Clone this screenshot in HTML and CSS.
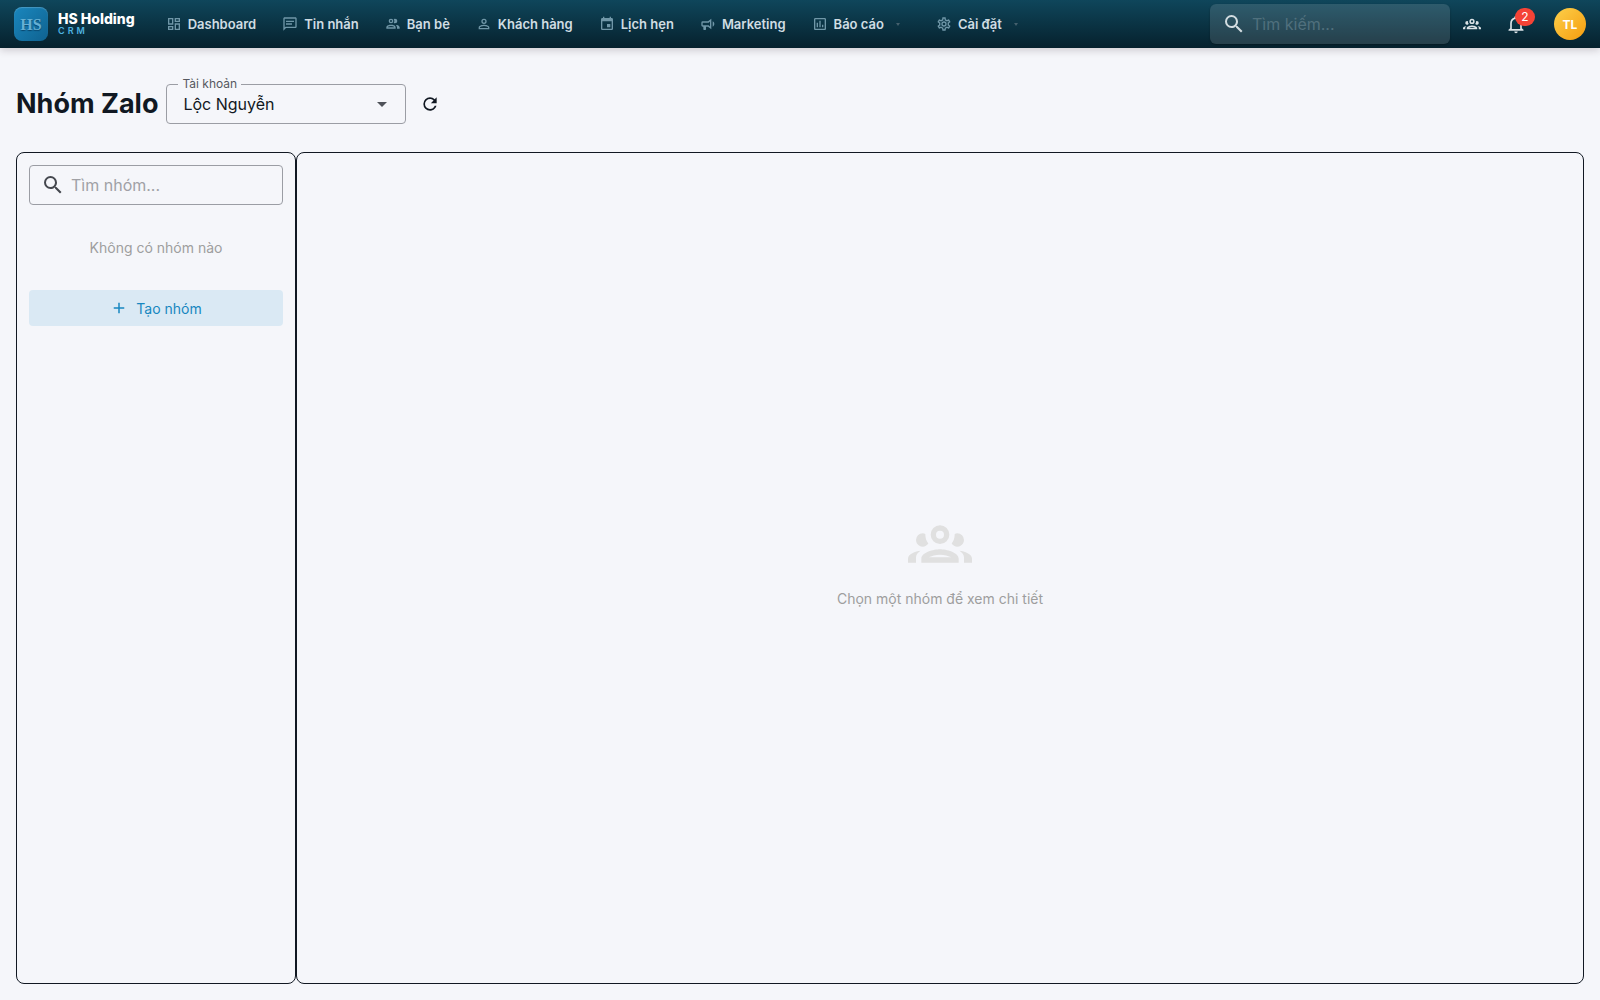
FILE: index.html
```
<!DOCTYPE html>
<html lang="vi">
<head>
  <meta charset="UTF-8">
  <title>Nhóm Zalo - HS Holding CRM</title>
  <meta name="viewport" content="width=device-width, initial-scale=1.0">
  <link rel="stylesheet" href="styles.css">
</head>
<body>

  <header class="navbar">
    <a href="#" class="brand">
      <span class="logo">HS</span>
      <span class="brand-text">
        <span class="brand-name">HS Holding</span>
        <span class="brand-sub">CRM</span>
      </span>
    </a>

    <nav class="menu">
      <a href="#"><svg class="icon" viewBox="0 0 24 24"><path d="M19,5V7H15V5H19M9,5V11H5V5H9M19,13V19H15V13H19M9,17V19H5V17H9M21,3H13V9H21V3M11,3H3V13H11V3M21,11H13V21H21V11M11,15H3V21H11V15Z"/></svg>Dashboard</a>
      <a href="#"><svg class="icon" viewBox="0 0 24 24"><path d="M20 2H4C2.9 2 2 2.9 2 4V22L6 18H20C21.1 18 22 17.1 22 16V4C22 2.9 21.1 2 20 2M20 16H5.2L4 17.2V4H20V16M6 7H18V9H6V7M6 11H15V13H6V11Z"/></svg>Tin nhắn</a>
      <a href="#"><svg class="icon" viewBox="0 0 24 24"><path d="M13.07 10.41A5 5 0 0 0 13.07 4.59A3.39 3.39 0 0 1 15 4A3.5 3.5 0 0 1 15 11A3.39 3.39 0 0 1 13.07 10.41M5.5 7.5A3.5 3.5 0 1 1 9 11A3.5 3.5 0 0 1 5.5 7.5M7.5 7.5A1.5 1.5 0 1 0 9 6A1.5 1.5 0 0 0 7.5 7.5M16 17V19H2V17S2 13 9 13 16 17 16 17M14 17C13.86 16.22 12.67 15 9 15S4.07 16.31 4 17M15.95 13A5.32 5.32 0 0 1 18 17V19H22V17S22 13.37 15.94 13Z"/></svg>Bạn bè</a>
      <a href="#"><svg class="icon" viewBox="0 0 24 24"><path d="M12,4A4,4 0 0,1 16,8A4,4 0 0,1 12,12A4,4 0 0,1 8,8A4,4 0 0,1 12,4M12,6A2,2 0 0,0 10,8A2,2 0 0,0 12,10A2,2 0 0,0 14,8A2,2 0 0,0 12,6M12,13C14.67,13 20,14.33 20,17V20H4V17C4,14.33 9.33,13 12,13M12,14.9C9.03,14.9 5.9,16.36 5.9,17V18.1H18.1V17C18.1,16.36 14.97,14.9 12,14.9Z"/></svg>Khách hàng</a>
      <a href="#"><svg class="icon" viewBox="0 0 24 24"><path d="M19,19H5V8H19M16,1V3H8V1H6V3H5C3.89,3 3,3.89 3,5V19A2,2 0 0,0 5,21H19A2,2 0 0,0 21,19V5C21,3.89 20.1,3 19,3H18V1M17,12H12V17H17V12Z"/></svg>Lịch hẹn</a>
      <a href="#"><svg class="icon" viewBox="0 0 24 24"><path d="M12,8H4A2,2 0 0,0 2,10V14A2,2 0 0,0 4,16H5V20A1,1 0 0,0 6,21H8A1,1 0 0,0 9,20V16H12L17,20V4L12,8M15,15.6L13,14H4V10H13L15,8.4V15.6M21.5,12C21.5,13.71 20.54,15.26 19,16V8C20.53,8.75 21.5,10.3 21.5,12Z"/></svg>Marketing</a>
      <a href="#" class="has-sub"><svg class="icon" viewBox="0 0 24 24"><path d="M9 17H7V10H9V17M13 17H11V7H13V17M17 17H15V13H17V17M19 19H5V5H19V19.1M19 3H5C3.9 3 3 3.9 3 5V19C3 20.1 3.9 21 5 21H19C20.1 21 21 20.1 21 19V5C21 3.9 20.1 3 19 3Z"/></svg>Báo cáo<span class="caret"></span></a>
      <a href="#" class="has-sub"><svg class="icon" viewBox="0 0 24 24"><path d="M12,8A4,4 0 0,1 16,12A4,4 0 0,1 12,16A4,4 0 0,1 8,12A4,4 0 0,1 12,8M12,10A2,2 0 0,0 10,12A2,2 0 0,0 12,14A2,2 0 0,0 14,12A2,2 0 0,0 12,10M10,22C9.75,22 9.54,21.82 9.5,21.58L9.13,18.93C8.5,18.68 7.96,18.34 7.44,17.94L4.95,18.95C4.73,19.03 4.46,18.95 4.34,18.73L2.34,15.27C2.21,15.05 2.27,14.78 2.46,14.63L4.57,12.97L4.5,12L4.57,11L2.46,9.37C2.27,9.22 2.21,8.95 2.34,8.73L4.34,5.27C4.46,5.05 4.73,4.96 4.95,5.05L7.44,6.05C7.96,5.66 8.5,5.32 9.13,5.07L9.5,2.42C9.54,2.18 9.75,2 10,2H14C14.25,2 14.46,2.18 14.5,2.42L14.87,5.07C15.5,5.32 16.04,5.66 16.56,6.05L19.05,5.05C19.27,4.96 19.54,5.05 19.66,5.27L21.66,8.73C21.79,8.95 21.73,9.22 21.54,9.37L19.43,11L19.5,12L19.43,13L21.54,14.63C21.73,14.78 21.79,15.05 21.66,15.27L19.66,18.73C19.54,18.95 19.27,19.04 19.05,18.95L16.56,17.95C16.04,18.34 15.5,18.68 14.87,18.93L14.5,21.58C14.46,21.82 14.25,22 14,22H10M11.25,4L10.88,6.61C9.68,6.86 8.62,7.5 7.85,8.39L5.44,7.35L4.69,8.65L6.8,10.2C6.4,11.37 6.4,12.64 6.8,13.8L4.68,15.36L5.43,16.66L7.86,15.62C8.63,16.5 9.68,17.14 10.87,17.38L11.24,20H12.76L13.13,17.39C14.32,17.14 15.37,16.5 16.14,15.62L18.57,16.66L19.32,15.36L17.2,13.81C17.6,12.64 17.6,11.37 17.2,10.2L19.31,8.65L18.56,7.35L16.15,8.39C15.38,7.5 14.32,6.86 13.12,6.62L12.75,4H11.25Z"/></svg>Cài đặt<span class="caret"></span></a>
    </nav>

    <div class="nav-right">
      <div class="nav-search">
        <svg class="icon" viewBox="0 0 24 24"><path d="M9.5,3A6.5,6.5 0 0,1 16,9.5C16,11.11 15.41,12.59 14.44,13.73L14.71,14H15.5L20.5,19L19,20.5L14,15.5V14.71L13.73,14.44C12.59,15.41 11.11,16 9.5,16A6.5,6.5 0 0,1 3,9.5A6.5,6.5 0 0,1 9.5,3M9.5,5C7,5 5,7 5,9.5C5,12 7,14 9.5,14C12,14 14,12 14,9.5C14,7 12,5 9.5,5Z"/></svg>
        <input type="text" placeholder="Tìm kiếm..." aria-label="Tìm kiếm">
      </div>
      <button class="nav-btn nav-group" aria-label="Nhóm">
        <svg class="icon" viewBox="0 0 24 24"><path d="M12,5A3.5,3.5 0 0,0 8.5,8.5A3.5,3.5 0 0,0 12,12A3.5,3.5 0 0,0 15.5,8.5A3.5,3.5 0 0,0 12,5M12,7A1.5,1.5 0 0,1 13.5,8.5A1.5,1.5 0 0,1 12,10A1.5,1.5 0 0,1 10.5,8.5A1.5,1.5 0 0,1 12,7M5.5,8A2.5,2.5 0 0,0 3,10.5C3,11.44 3.53,12.25 4.29,12.68C4.65,12.88 5.06,13 5.5,13C5.94,13 6.35,12.88 6.71,12.68C7.08,12.47 7.39,12.17 7.62,11.81C6.89,10.86 6.5,9.7 6.5,8.5C6.5,8.41 6.5,8.31 6.5,8.22C6.2,8.08 5.86,8 5.5,8M18.5,8C18.14,8 17.8,8.08 17.5,8.22C17.5,8.31 17.5,8.41 17.5,8.5C17.5,9.7 17.11,10.86 16.38,11.81C16.5,12 16.63,12.15 16.78,12.3C16.94,12.45 17.1,12.58 17.29,12.68C17.65,12.88 18.06,13 18.5,13C18.94,13 19.35,12.88 19.71,12.68C20.47,12.25 21,11.44 21,10.5A2.5,2.5 0 0,0 18.5,8M12,14C9.66,14 5,15.17 5,17.5V19H19V17.5C19,15.17 14.34,14 12,14M4.71,14.55C2.78,14.78 0,15.76 0,17.5V19H3V17.07C3,16.06 3.69,15.22 4.71,14.55M19.29,14.55C20.31,15.22 21,16.06 21,17.07V19H24V17.5C24,15.76 21.22,14.78 19.29,14.55M12,16C13.53,16 15.24,16.5 16.23,17H7.77C8.76,16.5 10.47,16 12,16Z"/></svg>
      </button>
      <button class="nav-btn nav-bell" aria-label="Thông báo">
        <svg class="icon" viewBox="0 0 24 24"><path d="M10 21H14C14 22.1 13.1 23 12 23S10 22.1 10 21M21 19V20H3V19L5 17V11C5 7.9 7 5.2 10 4.3V4C10 2.9 10.9 2 12 2S14 2.9 14 4V4.3C17 5.2 19 7.9 19 11V17L21 19M17 11C17 8.2 14.8 6 12 6S7 8.2 7 11V18H17V11Z"/></svg>
        <span class="badge">2</span>
      </button>
      <button class="avatar">TL</button>
    </div>
  </header>

  <main class="page">
    <div class="page-head">
      <h1>Nhóm Zalo</h1>
      <div class="account">
        <label for="account">Tài khoản</label>
        <select id="account">
          <option>Lộc Nguyễn</option>
        </select>
        <svg class="icon" viewBox="0 0 24 24"><path d="M7,10L12,15L17,10H7Z"/></svg>
      </div>
      <button class="refresh" aria-label="Tải lại">
        <svg class="icon" viewBox="0 0 24 24"><path d="M17.65,6.35C16.2,4.9 14.21,4 12,4A8,8 0 0,0 4,12A8,8 0 0,0 12,20C15.73,20 18.84,17.45 19.73,14H17.65C16.83,16.33 14.61,18 12,18A6,6 0 0,1 6,12A6,6 0 0,1 12,6C13.66,6 15.14,6.69 16.22,7.78L13,11H20V4L17.65,6.35Z"/></svg>
      </button>
    </div>

    <div class="panels">
      <aside class="panel group-list">
        <div class="field">
          <svg class="icon" viewBox="0 0 24 24"><path d="M9.5,3A6.5,6.5 0 0,1 16,9.5C16,11.11 15.41,12.59 14.44,13.73L14.71,14H15.5L20.5,19L19,20.5L14,15.5V14.71L13.73,14.44C12.59,15.41 11.11,16 9.5,16A6.5,6.5 0 0,1 3,9.5A6.5,6.5 0 0,1 9.5,3M9.5,5C7,5 5,7 5,9.5C5,12 7,14 9.5,14C12,14 14,12 14,9.5C14,7 12,5 9.5,5Z"/></svg>
          <input type="text" placeholder="Tìm nhóm..." aria-label="Tìm nhóm">
        </div>
        <p class="empty-text">Không có nhóm nào</p>
        <button class="create-btn">
          <svg class="icon" viewBox="0 0 24 24"><path d="M19,13H13V19H11V13H5V11H11V5H13V11H19V13Z"/></svg>
          Tạo nhóm
        </button>
      </aside>

      <section class="panel group-detail">
        <svg class="icon" viewBox="0 0 24 24"><path d="M12,5A3.5,3.5 0 0,0 8.5,8.5A3.5,3.5 0 0,0 12,12A3.5,3.5 0 0,0 15.5,8.5A3.5,3.5 0 0,0 12,5M12,7A1.5,1.5 0 0,1 13.5,8.5A1.5,1.5 0 0,1 12,10A1.5,1.5 0 0,1 10.5,8.5A1.5,1.5 0 0,1 12,7M5.5,8A2.5,2.5 0 0,0 3,10.5C3,11.44 3.53,12.25 4.29,12.68C4.65,12.88 5.06,13 5.5,13C5.94,13 6.35,12.88 6.71,12.68C7.08,12.47 7.39,12.17 7.62,11.81C6.89,10.86 6.5,9.7 6.5,8.5C6.5,8.41 6.5,8.31 6.5,8.22C6.2,8.08 5.86,8 5.5,8M18.5,8C18.14,8 17.8,8.08 17.5,8.22C17.5,8.31 17.5,8.41 17.5,8.5C17.5,9.7 17.11,10.86 16.38,11.81C16.5,12 16.63,12.15 16.78,12.3C16.94,12.45 17.1,12.58 17.29,12.68C17.65,12.88 18.06,13 18.5,13C18.94,13 19.35,12.88 19.71,12.68C20.47,12.25 21,11.44 21,10.5A2.5,2.5 0 0,0 18.5,8M12,14C9.66,14 5,15.17 5,17.5V19H19V17.5C19,15.17 14.34,14 12,14M4.71,14.55C2.78,14.78 0,15.76 0,17.5V19H3V17.07C3,16.06 3.69,15.22 4.71,14.55M19.29,14.55C20.31,15.22 21,16.06 21,17.07V19H24V17.5C24,15.76 21.22,14.78 19.29,14.55M12,16C13.53,16 15.24,16.5 16.23,17H7.77C8.76,16.5 10.47,16 12,16Z"/></svg>
        <p>Chọn một nhóm để xem chi tiết</p>
      </section>
    </div>
  </main>

</body>
</html>
```
FILE: styles.css
```
* {
  box-sizing: border-box;
}

body {
  margin: 0;
  min-height: 100vh;
  display: flex;
  flex-direction: column;
  font-family: Inter, sans-serif;
  font-size: 14px;
  line-height: 21px;
  background-color: #f5f6fa;
  color: #111822;
}

button, input, select {
  font-family: inherit;
  color: inherit;
}

button {
  border: none;
  padding: 0;
  background: none;
  cursor: pointer;
}

a {
  text-decoration: none;
}

p {
  margin: 0;
}

.icon {
  display: block;
  flex: none;
  fill: currentColor;
}

/* navbar */
.navbar {
  display: flex;
  align-items: center;
  height: 48px;
  padding: 0 14px;
  background: linear-gradient(#0f465b, #06212d);
  box-shadow: 0 2px 8px rgba(40, 20, 30, 0.2);
  position: sticky;
  top: 0;
  z-index: 10;
}

.brand {
  display: flex;
  align-items: center;
  gap: 10px;
  color: #fff;
}

.logo {
  display: flex;
  align-items: center;
  justify-content: center;
  width: 34px;
  height: 34px;
  border-radius: 8px;
  background: linear-gradient(135deg, #1a87be, #0f6290);
  box-shadow: inset 0 1px 1px rgba(255, 255, 255, 0.2);
  font-family: "Liberation Serif", serif;
  font-size: 16px;
  font-weight: bold;
  color: #66b0d4;
  text-shadow: 0 1px 1px rgba(0, 40, 70, 0.6);
}

.brand-text {
  display: flex;
  flex-direction: column;
}

.brand-name {
  font-size: 14px;
  line-height: 14px;
  font-weight: 800;
}

.brand-sub {
  font-size: 9px;
  line-height: 10px;
  font-weight: 600;
  letter-spacing: 3px;
  color: #4fb3e0;
}

.menu {
  display: flex;
  gap: 2px;
  margin-left: 19px;
}

.menu a {
  display: flex;
  align-items: center;
  gap: 6px;
  padding: 8px 12px;
  font-size: 13px;
  line-height: 18px;
  font-weight: 600;
  color: #d0dde3;
  white-space: nowrap;
}

.menu .icon {
  width: 16px;
  height: 16px;
  color: #7097a8;
}

.menu .has-sub {
  padding-right: 22px;
}

.caret {
  margin-left: 6px;
  border: 2px solid transparent;
  border-top: 3px solid #45606d;
  border-bottom: none;
}

.nav-right {
  display: flex;
  align-items: center;
  margin-left: auto;
}

.nav-search {
  display: flex;
  align-items: center;
  gap: 6px;
  width: 240px;
  height: 40px;
  padding: 0 12px;
  border-radius: 6px;
  background-color: rgba(255, 255, 255, 0.13);
  box-shadow: 0 1px 2px rgba(0, 0, 0, 0.3);
  color: #d3dde1;
}

.nav-search .icon,
.field .icon {
  width: 24px;
  height: 24px;
}

.nav-search input,
.field input {
  flex: 1;
  min-width: 0;
  padding: 0;
  border: none;
  outline: none;
  background: none;
  font-size: 16px;
}

.nav-search input::placeholder {
  color: #50707d;
}

.nav-btn {
  display: flex;
  align-items: center;
  justify-content: center;
  height: 36px;
  color: #dbe3e7;
}

.nav-group {
  width: 44px;
}

.nav-group .icon {
  width: 18px;
  height: 18px;
}

.nav-bell {
  position: relative;
  width: 44px;
}

.nav-bell .icon {
  width: 20px;
  height: 20px;
}

.badge {
  position: absolute;
  top: 2px;
  left: 21px;
  min-width: 20px;
  height: 18px;
  border-radius: 9px;
  background-color: #f44336;
  color: #fff;
  font-size: 12px;
  line-height: 18px;
}

.avatar {
  width: 32px;
  height: 32px;
  margin-left: 16px;
  border-radius: 50%;
  background: linear-gradient(135deg, #fdd04b, #f59c0e);
  color: #fff;
  font-size: 12px;
  font-weight: 700;
}

/* page */
.page {
  flex: 1;
  display: flex;
  flex-direction: column;
  padding: 36px 16px 16px;
}

.page-head {
  display: flex;
  align-items: center;
  gap: 8px;
  margin-bottom: 28px;
}

h1 {
  margin: 0;
  font-size: 27px;
  line-height: 36px;
  font-weight: 700;
}

.account {
  position: relative;
  width: 240px;
}

.account label {
  position: absolute;
  top: -10px;
  left: 12px;
  padding: 0 4px;
  background-color: #f5f6fa;
  font-size: 12px;
  line-height: 20px;
  color: #55585f;
}

.account select {
  display: block;
  width: 100%;
  height: 40px;
  padding: 0 40px 0 16px;
  border: 1px solid #9b9da4;
  border-radius: 4px;
  background: none;
  appearance: none;
  font-size: 16px;
}

.account .icon {
  position: absolute;
  top: 8px;
  right: 12px;
  width: 24px;
  height: 24px;
  color: #4f5259;
  pointer-events: none;
}

.refresh {
  display: flex;
  align-items: center;
  justify-content: center;
  width: 32px;
  height: 32px;
}

.refresh .icon {
  width: 20px;
  height: 20px;
}

.panels {
  flex: 1;
  display: flex;
}

.panel {
  border: 1px solid #111822;
  border-radius: 8px;
}

.group-list {
  width: 280px;
  padding: 12px;
}

.field {
  display: flex;
  align-items: center;
  gap: 6px;
  height: 40px;
  padding: 0 11px;
  border: 1px solid #9b9da4;
  border-radius: 4px;
  color: #44474e;
}

.field input::placeholder {
  color: #a0a1a6;
}

.empty-text {
  padding: 32px 0;
  text-align: center;
  color: #9e9e9e;
}

.create-btn {
  display: flex;
  align-items: center;
  justify-content: center;
  gap: 8px;
  width: 100%;
  height: 36px;
  border-radius: 4px;
  background-color: #dae9f4;
  color: #1787c0;
  font-size: 14px;
}

.create-btn .icon {
  width: 18px;
  height: 18px;
}

.group-detail {
  flex: 1;
  display: flex;
  flex-direction: column;
  align-items: center;
  justify-content: center;
  gap: 12px;
  padding-bottom: 16px;
  color: #9e9e9e;
}

.group-detail .icon {
  width: 64px;
  height: 64px;
  color: #e0e0e0;
}
```
